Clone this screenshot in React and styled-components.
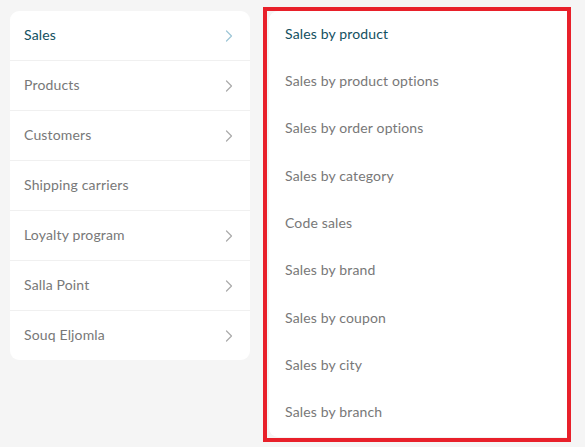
import React from "react";
import styled, { createGlobalStyle } from "styled-components";

const GlobalStyle = createGlobalStyle`
  html, body {
    margin: 0;
    padding: 0;
    background: #f5f5f5;
  }
  body {
    font-family: "Lato", "Noto Sans", sans-serif;
  }
`;

const categories = [
  { label: "Sales", active: true, arrow: true },
  { label: "Products", arrow: true },
  { label: "Customers", arrow: true },
  { label: "Shipping carriers", arrow: false },
  { label: "Loyalty program", arrow: true },
  { label: "Salla Point", arrow: true },
  { label: "Souq Eljomla", arrow: true },
];

const reports = [
  "Sales by product",
  "Sales by product options",
  "Sales by order options",
  "Sales by category",
  "Code sales",
  "Sales by brand",
  "Sales by coupon",
  "Sales by city",
  "Sales by branch",
];

function Chevron({ active }) {
  return (
    <Arrow viewBox="0 0 8 12" $active={active}>
      <path d="M1.5 1l5 5-5 5" fill="none" strokeWidth="1.2" strokeLinecap="round" strokeLinejoin="round" />
    </Arrow>
  );
}

function App() {
  return (
    <>
      <GlobalStyle />
      <Page>
        <Menu>
          {categories.map((c) => (
            <MenuRow key={c.label}>
              <MenuLabel $active={c.active}>{c.label}</MenuLabel>
              {c.arrow && <Chevron active={c.active} />}
            </MenuRow>
          ))}
        </Menu>
        <Highlight>
          <Reports>
            {reports.map((r, i) => (
              <ReportItem key={r} $active={i === 0}>
                {r}
              </ReportItem>
            ))}
          </Reports>
        </Highlight>
      </Page>
    </>
  );
}
export default App;

const Page = styled.div`
  display: flex;
  align-items: flex-start;
  gap: 13px;
  padding: 7px 0 0 10px;
`;

const Menu = styled.div`
  width: 240px;
  margin-top: 4px;
  background: #ffffff;
  border-radius: 9px;
  display: flex;
  flex-direction: column;
`;

const MenuRow = styled.div`
  height: 47px;
  display: flex;
  align-items: center;
  justify-content: space-between;
  padding: 0 17px 2px 14px;
  border-bottom: 1px solid #f0f0f0;

  &:last-child {
    border-bottom: none;
  }

  & > svg {
    margin-top: 3px;
  }
`;

const MenuLabel = styled.span`
  font-size: 14px;
  letter-spacing: 0.15px;
  color: ${(p) => (p.$active ? "#12505f" : "#787878")};
`;

const Arrow = styled.svg`
  width: 8px;
  height: 12px;
  stroke: ${(p) => (p.$active ? "#9ec6d6" : "#aaaaaa")};
`;

const Highlight = styled.div`
  width: 300px;
  height: 427px;
  border: 4px solid #e8202a;
  background: #f5f5f5;
  display: flex;
`;

const Reports = styled.div`
  flex: 1;
  margin: 0 0 1px 2px;
  background: #ffffff;
  border-radius: 9px 0 0 9px;
  display: flex;
  flex-direction: column;
`;

const ReportItem = styled.div`
  flex: 1;
  display: flex;
  align-items: center;
  padding: 0 0 3px 16px;
  font-size: 14px;
  letter-spacing: 0.15px;
  color: ${(p) => (p.$active ? "#12505f" : "#787878")};
`;
